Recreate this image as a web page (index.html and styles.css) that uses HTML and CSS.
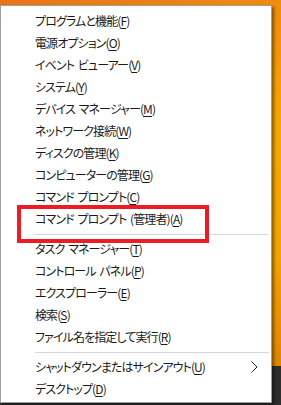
FILE: index.html
```html
<!DOCTYPE html>
<html lang="ja">
<head>
  <meta charset="UTF-8">
  <title>Win+X menu</title>
  <link rel="stylesheet" href="styles.css">
</head>
<body>
  <div class="menu">
    <ul class="group">
      <li class="item">プログラムと機能(<u>F</u>)</li>
      <li class="item">電源オプション(<u>O</u>)</li>
      <li class="item">イベント ビューアー(<u>V</u>)</li>
      <li class="item">システム(<u>Y</u>)</li>
      <li class="item">デバイス マネージャー(<u>M</u>)</li>
      <li class="item">ネットワーク接続(<u>W</u>)</li>
      <li class="item">ディスクの管理(<u>K</u>)</li>
      <li class="item">コンピューターの管理(<u>G</u>)</li>
      <li class="item">コマンド プロンプト(<u>C</u>)</li>
      <li class="item highlight">コマンド プロンプト (管理者)(<u>A</u>)</li>
    </ul>
    <div class="separator"></div>
    <ul class="group">
      <li class="item">タスク マネージャー(<u>T</u>)</li>
      <li class="item">コントロール パネル(<u>P</u>)</li>
      <li class="item">エクスプローラー(<u>E</u>)</li>
      <li class="item">検索(<u>S</u>)</li>
      <li class="item">ファイル名を指定して実行(<u>R</u>)</li>
    </ul>
    <div class="separator"></div>
    <ul class="group">
      <li class="item submenu">
        <span>シャットダウンまたはサインアウト(<u>U</u>)</span>
        <svg class="chevron" width="7" height="12" viewBox="0 0 7 12">
          <polyline points="0.5,0.5 6,6 0.5,11.5" fill="none" stroke="#2a2a2a" stroke-width="1"/>
        </svg>
      </li>
      <li class="item">デスクトップ(<u>D</u>)</li>
    </ul>
  </div>
</body>
</html>
```

FILE: styles.css
```css
* {
  margin: 0;
  padding: 0;
  box-sizing: border-box;
}
html, body {
  height: 100%;
}
body {
  font-family: "Noto Sans CJK JP", "Noto Sans", sans-serif;
  font-size: 12px;
  font-feature-settings: "palt";
  letter-spacing: -0.9px;
  word-spacing: 2px;
  color: #1a1a1a;
  padding-top: 5px;
  overflow: hidden;
  background:
    linear-gradient(to bottom, transparent 366px, #2e2e2e 366px),
    linear-gradient(160deg, #e9741a 0%, #f7a700 45%, #f5a300 70%, #d97a00 100%);
}
.menu {
  width: 272px;
  height: 398px;
  background-color: #ffffff;
  border: 1px solid #a0a0a0;
  padding: 4px 2px 3px 0;
  box-shadow: 2px 2px 3px rgba(0, 0, 0, 0.45);
}
.group {
  list-style: none;
}
.item {
  height: 22px;
  line-height: 22px;
  padding-left: 34px;
  white-space: nowrap;
  position: relative;
}
.item u {
  text-decoration: underline;
  text-underline-offset: 2px;
}
.highlight::after {
  content: "";
  position: absolute;
  left: 16px;
  top: -3px;
  width: 184px;
  height: 30px;
  border: 4px solid #ec1c24;
}
.separator {
  height: 1px;
  background-color: #d7d7d7;
  margin: 4px 0 3px 34px;
}
.submenu {
  display: flex;
  align-items: center;
  justify-content: space-between;
  padding-right: 11px;
}
.chevron {
  display: block;
}
```
